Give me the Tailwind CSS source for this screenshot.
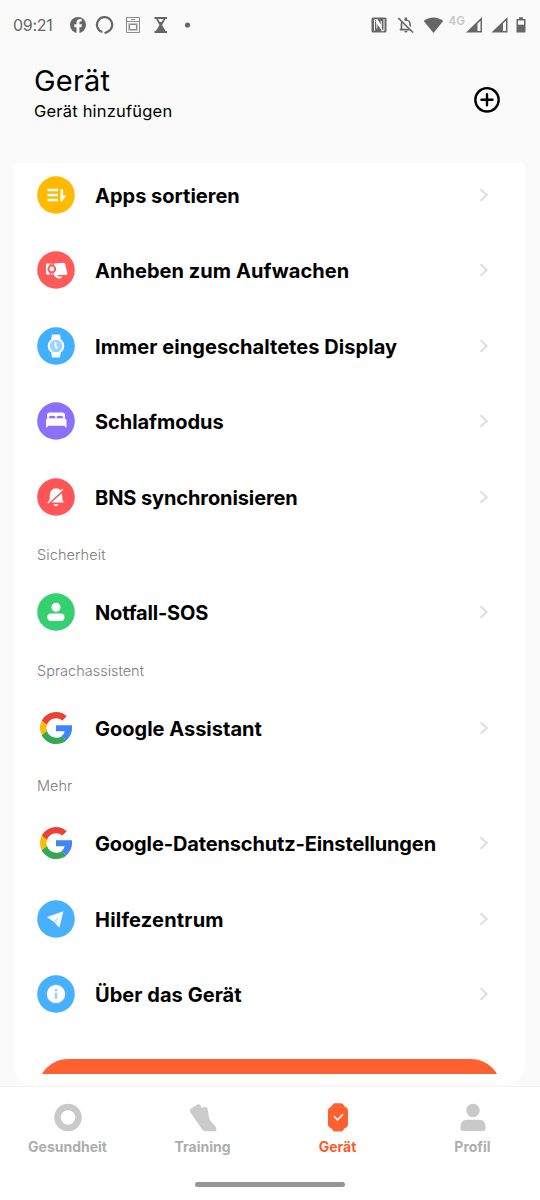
<!DOCTYPE html>
<html lang="de">
<head>
<meta charset="utf-8">
<title>Gerät</title>
<script src="https://cdn.jsdelivr.net/npm/@tailwindcss/browser@4"></script>
</head>
<body class="bg-[#fafafa]">
<svg class="hidden">
  <symbol id="chev" viewBox="0 0 10 14"><path d="M1.5 1.2 7.7 7l-6.2 5.8" fill="none" stroke="#dedede" stroke-width="2"/></symbol>
  <symbol id="google" viewBox="0 0 48 48">
    <path fill="#EA4335" d="M24 9.5c3.54 0 6.71 1.22 9.21 3.6l6.85-6.85C35.9 2.38 30.47 0 24 0 14.62 0 6.51 5.38 2.56 13.22l7.98 6.19C12.43 13.72 17.74 9.5 24 9.5z"/>
    <path fill="#4285F4" d="M48 20H24v9.020h12.940c-.58 2.960-2.260 5.480-4.780 7.180l7.730 6C44.400 38.020 48 31.840 48 24.550z"/>
    <path fill="#FBBC05" d="M10.53 28.59c-.48-1.45-.76-2.99-.76-4.59s.27-3.14.76-4.59l-7.98-6.19C.92 16.46 0 20.12 0 24c0 3.88.92 7.54 2.56 10.78l7.97-6.19z"/>
    <path fill="#34A853" d="M24 48c6.48 0 11.93-2.13 15.89-5.81l-7.73-6c-2.15 1.45-4.92 2.3-8.16 2.3-6.26 0-11.57-4.22-13.47-9.91l-7.98 6.19C6.51 42.62 14.62 48 24 48z"/>
  </symbol>
</svg>
<div class="flex h-[1200px] w-[540px] flex-col overflow-hidden bg-[#fafafa] font-['Inter',sans-serif] text-black">
  <header class="flex h-[50px] shrink-0 items-center text-[#666]">
    <span class="ml-[13px] w-[56px] text-[16px] tracking-[-0.3px] whitespace-nowrap">09:21</span>
    <svg class="h-[18px] w-[124px]" viewBox="0 0 124 18">
      <circle cx="9" cy="9" r="8" fill="#666"/>
      <path d="M7.500 17.200v-6H5.300V8.300h2.200V6.700c0-2.500 1.400-3.800 3.700-3.800.8 0 1.500.1 1.500.1v2.400h-1c-1 0-1.300.6-1.300 1.300v1.600h2.500l-.5 2.900h-2v6z" fill="#fafafa"/>
      <path d="M33.400 16a7.600 7.600 0 1 1 5.200-.3c-1.400.6-2.200 1-2.800 1.800" fill="none" stroke="#666" stroke-width="2.200"/>
      <g fill="none" stroke="#8b8b8b"><path d="M57.500 1.500h13v15h-13zM57.500 5.500h13M60.500 8.500h7v5h-7zM62 3.500h4"/><path d="M59.500 7.500h9v7h-9z" stroke="#c4c4c4"/></g>
      <path d="M85.500 2h12.500M85.500 16h12.500" stroke="#666" stroke-width="2"/><path d="M88 3 91.500 9 88 15h7.500L92 9l3.500-6" fill="none" stroke="#666" stroke-width="1.800"/><path d="M91.700 10l4.300 4v2h-8.500v-2zM89.500 6h4.500l-2.200 3z" fill="#666"/>
      <circle cx="118.500" cy="9" r="2.600" fill="#666"/>
    </svg>
    <svg class="ml-[177px] h-[18px] w-[78px]" viewBox="0 0 78 18">
      <rect x="1.500" y="1.500" width="15" height="15" rx="1.500" fill="#666"/>
      <path d="M6.800 3.700H4.500v11.200M5.800 5.500l7.300 9.500M6.800 3.500v9M11.200 14.700h2.800V3M11.200 13V5" fill="none" stroke="#fafafa" stroke-width="1"/><path d="M6.300 3.500h1.400l4 6v4.800l-5.400-7.500z" fill="#fafafa"/>
      <path d="M31.500 13.500V8.300a4.300 4.300 0 0 1 8.600 0v5.200M29.800 13.700h12" fill="none" stroke="#666" stroke-width="1.700"/><path d="M34.300 15h3.200a1.600 1.600 0 0 1-3.200 0zM34.700 1.500h2.300v3h-2.300z" fill="#666"/><path d="M29.300 1.300 43.600 16" stroke="#fafafa" stroke-width="3"/><path d="M28.300 2 43 16.500" stroke="#666" stroke-width="1.700"/>
      <path d="M53.700 5.100c5-4.800 14.500-4.800 19.500 0L63.500 17z" fill="#666"/>
    </svg>
    <span class="mb-[7px] ml-[0.5px] w-[17.500px] text-[11.500px] leading-none font-semibold text-[#c6c6c6]">4G</span>
    <svg class="h-[18px] w-[63px]" viewBox="0 0 63 18">
      <g id="sig"><path d="M0 16.500 16 1v15.500z" fill="#666"/><path d="M11.500 7.500l3-2.800V15h-3z" fill="#fafafa"/></g>
      <use href="#sig" x="25.500"/>
      <path d="M50.500 3H53V1.300h4V3h2.500v13.500h-9z" fill="#666"/><path d="M52 4.500h6v4.200h-6z" fill="#fafafa"/>
    </svg>
  </header>

  <div class="flex h-[113px] shrink-0 items-start justify-between pr-[39px] pl-[34px]">
    <div>
      <h1 class="mt-[12px] text-[29px] leading-[38px] tracking-[0.2px]">Gerät</h1>
      <p class="text-[16.500px] leading-[23px] tracking-[0.2px]">Gerät hinzufügen</p>
    </div>
    <svg class="mt-[35px] h-[28px] w-[28px]" viewBox="0 0 28 28" fill="none" stroke="#000" stroke-width="2.400"><circle cx="14" cy="14.800" r="11.700"/><path d="M14 9.300v11M8.500 14.800h11" stroke-linecap="round"/></svg>
  </div>

  <main class="mr-[15px] ml-[14px] h-[922px] shrink-0 rounded-b-[20px] bg-white">
    <div class="h-[911px] overflow-hidden pr-[36px] pl-[23px]">
      <ul class="-mt-[6px] text-[20px] font-bold whitespace-nowrap">
        <li class="flex h-[75.500px] items-center">
          <svg class="mr-[20px] h-[38px] w-[38px]" viewBox="0 0 38 38"><circle cx="19" cy="19" r="18.800" fill="#ffba00"/><path d="M10.500 14h10.500M10.500 19h10.500M10.500 24h10.500" stroke="#fff" stroke-width="2.500"/><path d="M23.500 13.200h2.600v6.300h3.400L24.800 25.500h-1.300z" fill="#fff"/></svg>
          <span class="flex-1 pt-[2px]">Apps sortieren</span><svg class="h-[14px] w-[10px]"><use href="#chev"/></svg>
        </li>
        <li class="flex h-[75.500px] items-center">
          <svg class="mr-[20px] h-[38px] w-[38px]" viewBox="0 0 38 38"><circle cx="19" cy="19" r="18.800" fill="#ff5a5a"/><path d="M9.500 12.500h6v11.200h-5.200l-1.300-1.500V13.500z" fill="#fff"/><path d="M17 12.500l9.500-.7q1.300 0 1.600 1.200l2.200 9c.3 1.500-.8 2.100-2.800 2h-7l.3 1.300 4.700.4q-1 2-3.700 1.700-4-.4-5.300-4.700z" fill="#fff"/><circle cx="14.800" cy="18" r="3.400" fill="#fff" stroke="#ff5a5a" stroke-width="2"/><path d="M13.300 12.500v3M13.300 20.500v3.500" stroke="#ff5a5a" stroke-width="1.500"/></svg>
          <span class="flex-1 pt-[2px] tracking-[0.05px]">Anheben zum Aufwachen</span><svg class="h-[14px] w-[10px]"><use href="#chev"/></svg>
        </li>
        <li class="flex h-[75.500px] items-center">
          <svg class="mr-[20px] h-[38px] w-[38px]" viewBox="0 0 38 38"><circle cx="19" cy="19" r="18.800" fill="#42b0fc"/><path d="M15 7.500h8l.8 5h-9.600zM14.200 25.500h9.600l-.8 5h-8z" fill="#fff"/><circle cx="19" cy="19" r="7.300" fill="#9bd5ff" stroke="#fff" stroke-width="2"/><path d="M18.500 15v4.500l2 1.800" fill="none" stroke="#fff" stroke-width="1.700"/></svg>
          <span class="flex-1 pt-[2px] tracking-[0.06px]">Immer eingeschaltetes Display</span><svg class="h-[14px] w-[10px]"><use href="#chev"/></svg>
        </li>
        <li class="flex h-[75.500px] items-center">
          <svg class="mr-[20px] h-[38px] w-[38px]" viewBox="0 0 38 38"><circle cx="19" cy="19" r="18.800" fill="#8b70fa"/><path d="M10.700 16.500V13q0-1.800 1.800-1.800h13q1.800 0 1.800 1.800v3.500" fill="#fff" stroke="#fff" stroke-width="1.200"/><path d="M12 16v-1.400q3-1.600 6.300 0V16zM19.700 16v-1.400q3.300-1.600 6.300 0V16z" fill="#8b70fa"/><path d="M9 25.300v-7q0-1.800 2-1.800h16.500q2 0 2 1.800v7h-1.700v-1.500H10.700v1.500z" fill="#fff"/></svg>
          <span class="flex-1 pt-[2px] tracking-[-0.05px]">Schlafmodus</span><svg class="h-[14px] w-[10px]"><use href="#chev"/></svg>
        </li>
        <li class="flex h-[75.500px] items-center">
          <svg class="mr-[20px] h-[38px] w-[38px]" viewBox="0 0 38 38"><circle cx="19" cy="19" r="18.800" fill="#ff5557"/><path d="M11.500 24c1-1.200 1.200-2.500 1.200-5 0-5.800 2.500-8.800 6.300-8.800s6.300 3 6.300 8.800c0 2.500.6 4.300 1.700 5.500H11.500zM16.500 26.300h5q-.5 2-2.500 2t-2.500-2z" fill="#fff"/><path d="M11 26.300 26.800 12.300" stroke="#ff5557" stroke-width="2"/><path d="M10.800 25 25.800 11.200" stroke="#fff" stroke-width="1.500"/></svg>
          <span class="flex-1 pt-[2px] tracking-[-0.1px]">BNS synchronisieren</span><svg class="h-[14px] w-[10px]"><use href="#chev"/></svg>
        </li>
        <li class="flex h-[40px] items-center pt-[1px] text-[14.500px] font-light tracking-[0.1px] text-[#7c7c7c]">Sicherheit</li>
        <li class="flex h-[75.500px] items-center">
          <svg class="mr-[20px] h-[38px] w-[38px]" viewBox="0 0 38 38"><circle cx="19" cy="19" r="18.800" fill="#36d070"/><circle cx="19" cy="14.200" r="4.500" fill="#fff"/><rect x="10.300" y="20.500" width="17.200" height="7.500" rx="3.700" fill="#fff"/></svg>
          <span class="flex-1 pt-[2px] tracking-[-0.18px]">Notfall-SOS</span><svg class="h-[14px] w-[10px]"><use href="#chev"/></svg>
        </li>
        <li class="flex h-[40px] items-center pt-[1px] text-[14.500px] font-light tracking-[0px] text-[#7c7c7c]">Sprachassistent</li>
        <li class="flex h-[75.500px] items-center">
          <svg class="mr-[23px] ml-[3px] h-[32px] w-[32px]"><use href="#google"/></svg>
          <span class="flex-1 pt-[2px]">Google Assistant</span><svg class="h-[14px] w-[10px]"><use href="#chev"/></svg>
        </li>
        <li class="flex h-[40px] items-center pt-[1px] text-[14.500px] font-light tracking-[0px] text-[#7c7c7c]">Mehr</li>
        <li class="flex h-[75.500px] items-center">
          <svg class="mr-[23px] ml-[3px] h-[32px] w-[32px]"><use href="#google"/></svg>
          <span class="flex-1 pt-[2px] tracking-[-0.14px]">Google-Datenschutz-Einstellungen</span><svg class="h-[14px] w-[10px]"><use href="#chev"/></svg>
        </li>
        <li class="flex h-[75.500px] items-center">
          <svg class="mr-[20px] h-[38px] w-[38px]" viewBox="0 0 38 38"><circle cx="19" cy="19" r="18.800" fill="#47b0ff"/><path d="M10 17 26.500 11.300 22.300 27.700l-3.500-3.700 2.500-6.500-5 4z" fill="#fff"/><path d="M21.500 17.500 18.800 24l-2.600-3z" fill="#d4ecff"/></svg>
          <span class="flex-1 pt-[2px] tracking-[0.2px]">Hilfezentrum</span><svg class="h-[14px] w-[10px]"><use href="#chev"/></svg>
        </li>
        <li class="flex h-[75.500px] items-center">
          <svg class="mr-[20px] h-[38px] w-[38px]" viewBox="0 0 38 38"><circle cx="19" cy="19" r="18.800" fill="#47b0ff"/><circle cx="19" cy="19" r="9.200" fill="#fff"/><path d="M19 14v2.200M19 17.800v6" stroke="#91ceff" stroke-width="2.400"/></svg>
          <span class="flex-1 pt-[2px] tracking-[0.05px]">Über das Gerät</span><svg class="h-[14px] w-[10px]"><use href="#chev"/></svg>
        </li>
      </ul>
      <div class="mt-[27px] mr-[-12px] ml-[1px] h-[60px] rounded-full bg-[#ff602f]"></div>
    </div>
  </main>

  <nav class="mt-[1px] flex h-[114px] shrink-0 flex-col border-t border-[#f3f3f3] bg-white text-[14px] font-bold text-[#adadad]">
    <div class="grid grid-cols-4 pt-[15px]">
      <div class="flex flex-col items-center"><svg class="h-[30px] w-[30px]" viewBox="0 0 30 30"><circle cx="15" cy="15.500" r="10.500" fill="none" stroke="#c9c9c9" stroke-width="6.500"/></svg><span class="mt-[5px] leading-[20px]">Gesundheit</span></div>
      <div class="flex flex-col items-center"><svg class="h-[30px] w-[30px]" viewBox="0 0 30 30"><path d="M2.300 10.200Q1 8 3 6.500L9.500 2.500q2-.8 3 1l1.500 2.700q1-.5 2.200-1.200 2.500-.6 3.300 1.500l1.500 9q.3 2.500 2.500 4.500l3.500 3.700q1.500 1.500 1.500 4.500 0 1-1 1H17q-1.500 0-2.800-1.800z" fill="#cbcbcb"/></svg><span class="mt-[5px] leading-[20px]">Training</span></div>
      <div class="flex flex-col items-center text-[#fb5a26]"><svg class="h-[30px] w-[30px]" viewBox="0 0 30 30"><path d="M12 1.300h6q2 0 2.600 1.700.6 1.600 2.200 2.200 2.200 1 2.200 3.300v14q0 2.300-2.200 3.300-1.600.6-2.200 2-.6 1.700-2.600 1.700h-6q-2 0-2.600-1.700-.6-1.400-2.200-2Q5 24.800 5 22.500v-14Q5 6.200 7.200 5.200 8.800 4.600 9.400 3q.6-1.700 2.600-1.700z" fill="#ff602f"/><path d="M11 14.300l3.500 3.500 5.500-5.600" fill="none" stroke="#fff" stroke-width="1.600"/></svg><span class="mt-[5px] leading-[20px]">Gerät</span></div>
      <div class="flex flex-col items-center"><svg class="h-[30px] w-[30px]" viewBox="0 0 30 30" fill="#c9c9c9"><circle cx="15" cy="8.500" r="6.700"/><path d="M9 17.700h12q6.500 0 6.500 6.500v2.300q0 2.500-2.500 2.500H5q-2.500 0-2.500-2.500v-2.300Q2.500 17.700 9 17.700z"/></svg><span class="mt-[5px] leading-[20px]">Profil</span></div>
    </div>
    <div class="mt-[25px] h-[5px] w-[150px] self-center rounded-full bg-[#969696]"></div>
  </nav>
</div>
</body>
</html>
